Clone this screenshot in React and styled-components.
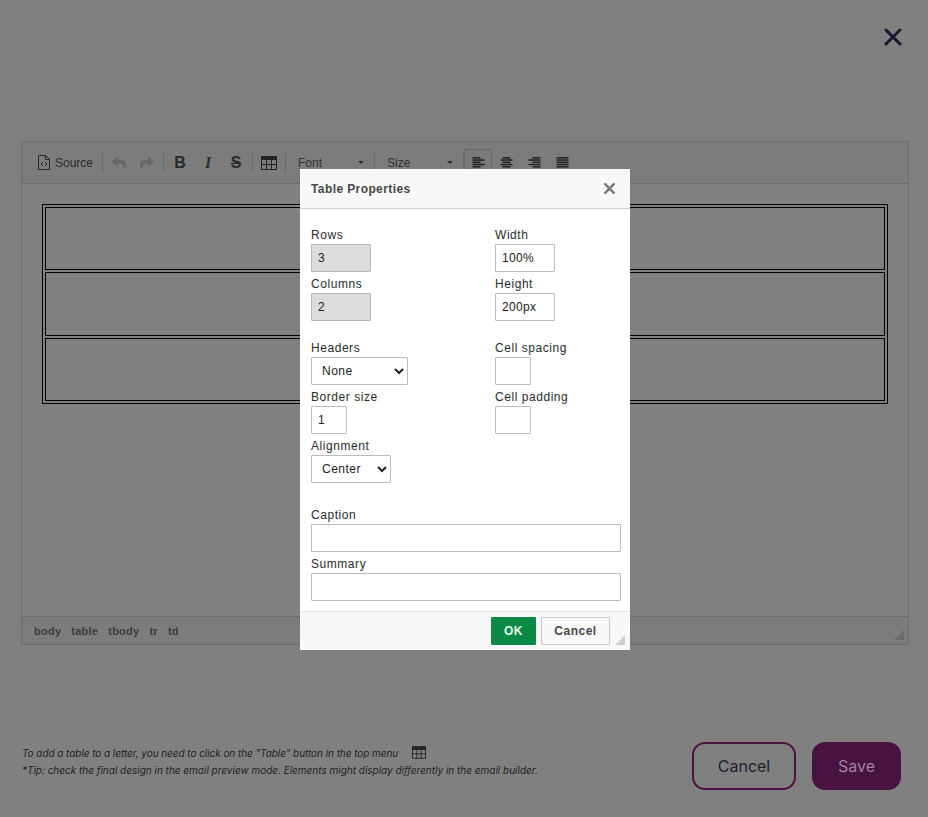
import React from 'react'
import styled, { createGlobalStyle } from 'styled-components'
import { FaReply, FaShare } from 'react-icons/fa'

const GlobalStyle = createGlobalStyle`
  html, body {
    margin: 0;
    padding: 0;
    background: #808080;
  }

  * {
    box-sizing: border-box;
  }
`

const Page = styled.div`
  position: relative;
  width: 928px;
  height: 817px;
  overflow: hidden;
  display: flex;
  flex-direction: column;
  padding: 0 19px 0 21px;
  background: #808080;
  font-family: 'Liberation Sans', Arial, sans-serif;
`

const TopBar = styled.div`
  height: 141px;
  display: flex;
  justify-content: flex-end;
  padding: 28px 7px 0 0;
  color: #17172f;
`

const Editor = styled.div`
  height: 504px;
  display: flex;
  flex-direction: column;
  border: 1px solid #6f6f6f;
`

const Toolbar = styled.div`
  height: 42px;
  flex: none;
  display: flex;
  align-items: center;
  padding-left: 15px;
  background: #7c7c7c;
  border-bottom: 1px solid #6c6c6c;
`

const SourceButton = styled.div`
  width: 63px;
  display: flex;
  align-items: center;
  gap: 5px;
  padding-left: 1px;
  font-size: 12px;
  color: #2c2c2c;
`

const Separator = styled.span`
  width: 1px;
  height: 20px;
  margin: 0 ${props => (props.$tight ? '0' : '2px')} 0 2px;
  background: #6a6a6a;
`

const Tool = styled.div`
  width: 28px;
  height: 28px;
  display: flex;
  align-items: center;
  justify-content: center;
  color: ${props => props.$color || '#2a2a2a'};
  border: 1px solid ${props => (props.$active ? '#686868' : 'transparent')};
  background: ${props => (props.$active ? '#797979' : 'transparent')};
`

const Glyph = styled.span`
  font-family: ${props => (props.$serif ? "'Liberation Serif', serif" : "'Liberation Sans', sans-serif")};
  font-size: 16px;
  font-weight: bold;
  font-style: ${props => (props.$italic ? 'italic' : 'normal')};
  text-decoration: ${props => (props.$strike ? 'line-through' : 'none')};
  color: #2a2a2a;
`

const Combo = styled.div`
  width: 84px;
  display: flex;
  align-items: center;
  justify-content: space-between;
  padding: 0 8px 0 10px;
  font-size: 12px;
  color: #333;
`

const Caret = styled.span`
  width: 0;
  height: 0;
  border-left: 3px solid transparent;
  border-right: 3px solid transparent;
  border-top: 3px solid #2c2c2c;
`

const Content = styled.div`
  flex: 1;
  padding: 20px 20px 0;
`

const DocTable = styled.table`
  width: 100%;
  height: 200px;
  border: 1px solid #000;
  border-spacing: 2px;

  td {
    border: 1px solid #000;
  }
`

const PathBar = styled.div`
  position: relative;
  height: 28px;
  flex: none;
  display: flex;
  align-items: center;
  gap: 10px;
  padding: 0 12px;
  background: #7c7c7c;
  border-top: 1px solid #6c6c6c;
  font-size: 11px;
  font-weight: bold;
  letter-spacing: 0.25px;
  color: #3c3c3c;
`

const Grip = styled.span`
  position: absolute;
  right: ${props => props.$right}px;
  bottom: ${props => props.$bottom}px;
  width: 10px;
  height: 10px;
  background: ${props => props.$color};
  clip-path: polygon(100% 0, 100% 100%, 0 100%);
`

const Footer = styled.div`
  margin-top: 97px;
  display: flex;
  justify-content: space-between;
  padding-right: 8px;
`

const Notes = styled.div`
  padding: 2px 0 0 1px;
  font-family: Inter, sans-serif;
  font-size: 10px;
  font-style: italic;
  color: #222;
`

const Note = styled.div`
  display: flex;
  align-items: center;
  gap: 14px;
  height: 17px;
  letter-spacing: ${props => (props.$tight ? '-0.06px' : '-0.01px')};
`

const Actions = styled.div`
  display: flex;
  gap: 16px;
`

const PageButton = styled.button`
  width: ${props => (props.$primary ? '89px' : '104px')};
  height: 48px;
  border-radius: 13px;
  border: 2px solid #481242;
  background: ${props => (props.$primary ? '#481242' : 'transparent')};
  color: ${props => (props.$primary ? '#a57fa4' : '#1d1f2c')};
  font-family: Inter, sans-serif;
  font-size: 16px;
`

const Dialog = styled.div`
  position: absolute;
  left: 300px;
  top: 169px;
  width: 330px;
  height: 481px;
  display: flex;
  flex-direction: column;
  background: #fff;
  color: #2b2b2b;
  font-size: 12px;
  letter-spacing: 0.55px;
`

const DialogHeader = styled.div`
  height: 40px;
  flex: none;
  display: flex;
  align-items: center;
  justify-content: space-between;
  padding: 0 15px 0 11px;
  background: #f8f8f8;
  border-bottom: 1px solid #d1d1d1;
`

const DialogTitle = styled.div`
  font-weight: bold;
  letter-spacing: 0.4px;
  color: #484848;
`

const DialogClose = styled.span`
  display: flex;
  color: #7a7a7a;
`

const DialogBody = styled.div`
  flex: 1;
  padding: 19px 9px 0 11px;
`

const Columns = styled.div`
  display: grid;
  grid-template-columns: 184px 1fr;
  margin-bottom: ${props => props.$after}px;
`

const Field = styled.div`
  height: 49px;
`

const Label = styled.label`
  display: block;
  height: 16px;
  line-height: 14px;
`

const TextInput = styled.input`
  display: block;
  width: ${props => props.$width};
  height: 28px;
  padding: 0 6px;
  border: 1px solid ${props => (props.disabled ? '#b8b8b8' : '#bcbcbc')};
  border-radius: 1px;
  background: ${props => (props.disabled ? '#dcdcdc' : '#fff')};
  color: #222;
  font-family: 'Liberation Sans', Arial, sans-serif;
  font-size: 12px;
  letter-spacing: 0.3px;
  outline: none;
  opacity: 1;
`

const Select = styled.select`
  display: block;
  width: ${props => props.$width};
  height: 28px;
  padding: 0 2px 0 6px;
  border: 1px solid #bcbcbc;
  border-radius: 1px;
  background: #fff;
  color: #222;
  font-family: 'Liberation Sans', Arial, sans-serif;
  font-size: 12px;
  letter-spacing: 0.5px;
`

const DialogFooter = styled.div`
  position: relative;
  height: 39px;
  flex: none;
  display: flex;
  justify-content: flex-end;
  gap: 5px;
  padding: 5px 20px 0 0;
  background: #f8f8f8;
  border-top: 1px solid #e4e4e4;
`

const DialogButton = styled.button`
  width: ${props => (props.$primary ? '45px' : '69px')};
  height: 28px;
  padding: 0;
  border: 1px solid ${props => (props.$primary ? '#0b8a46' : '#c8c8c8')};
  border-radius: 1px;
  background: ${props => (props.$primary ? '#0b8a46' : '#f8f8f8')};
  color: ${props => (props.$primary ? '#e8f4ec' : '#484848')};
  font-family: 'Liberation Sans', Arial, sans-serif;
  font-size: 12px;
  font-weight: bold;
  letter-spacing: 0.5px;
`

const CloseIcon = ({ size, weight }) => (
  <svg width={size} height={size} viewBox="0 0 18 18" fill="none" stroke="currentColor" strokeWidth={weight} strokeLinecap="round">
    <path d="M2 2 L16 16 M16 2 L2 16" />
  </svg>
)

const SourceIcon = () => (
  <svg width="12" height="15" viewBox="0 0 12 15" fill="none" stroke="#2a2a2a" strokeWidth="1">
    <path d="M.5 .5 H7.5 L11.5 4.5 V14.5 H.5 Z M7.5 .5 V4.5 H11.5" />
    <path d="M5 7 L3 9 L5 11 M7 7 L9 9 L7 11" />
  </svg>
)

const TableIcon = ({ width = 16, height = 14 }) => (
  <svg width={width} height={height} viewBox="0 0 16 14" fill="none" stroke="#222" strokeWidth="1">
    <rect x=".5" y=".5" width="15" height="13" />
    <rect x="0" y="0" width="16" height="4" fill="#222" stroke="none" />
    <path d="M5.5 4 V14 M10.5 4 V14 M0 8.5 H16" />
  </svg>
)

const alignLines = {
  left: [[0, 8], [0, 12], [0, 8], [0, 12], [0, 8]],
  center: [[2, 8], [0, 12], [2, 8], [0, 12], [2, 8]],
  right: [[4, 8], [0, 12], [4, 8], [0, 12], [4, 8]],
  justify: [[0, 12], [0, 12], [0, 12], [0, 12], [0, 12]],
}

const AlignIcon = ({ kind }) => (
  <svg width="13" height="11" viewBox="0 0 12 11" fill="#262626">
    {alignLines[kind].map(([x, w], i) => (
      <rect key={i} x={x} y={i * 2.25} width={w} height="1.6" />
    ))}
  </svg>
)

const rows = [0, 1, 2]

const App = () => {
  return (
    <Page>
      <GlobalStyle />
      <TopBar>
        <CloseIcon size={18} weight={3} />
      </TopBar>

      <Editor>
        <Toolbar>
          <SourceButton>
            <SourceIcon />
            Source
          </SourceButton>
          <Separator />
          <Tool $color="#666"><FaReply size={14} /></Tool>
          <Tool $color="#666"><FaShare size={14} /></Tool>
          <Separator />
          <Tool><Glyph>B</Glyph></Tool>
          <Tool><Glyph $serif $italic>I</Glyph></Tool>
          <Tool><Glyph $strike>S</Glyph></Tool>
          <Separator />
          <Tool><TableIcon /></Tool>
          <Separator />
          <Combo>Font<Caret /></Combo>
          <Separator />
          <Combo>Size<Caret /></Combo>
          <Separator $tight />
          <Tool $active><AlignIcon kind="left" /></Tool>
          <Tool><AlignIcon kind="center" /></Tool>
          <Tool><AlignIcon kind="right" /></Tool>
          <Tool><AlignIcon kind="justify" /></Tool>
        </Toolbar>
        <Content>
          <DocTable>
            <tbody>
              {rows.map(row => (
                <tr key={row}>
                  <td />
                </tr>
              ))}
            </tbody>
          </DocTable>
        </Content>
        <PathBar>
          <span>body</span>
          <span>table</span>
          <span>tbody</span>
          <span>tr</span>
          <span>td</span>
          <Grip $right={4} $bottom={4} $color="#6a6a6a" />
        </PathBar>
      </Editor>

      <Footer>
        <Notes>
          <Note $tight>
            To add a table to a letter, you need to click on the "Table" button in the top menu
            <TableIcon width={14} height={13} />
          </Note>
          <Note>*Tip: check the final design in the email preview mode. Elements might display differently in the email builder.</Note>
        </Notes>
        <Actions>
          <PageButton>Cancel</PageButton>
          <PageButton $primary>Save</PageButton>
        </Actions>
      </Footer>

      <Dialog>
        <DialogHeader>
          <DialogTitle>Table Properties</DialogTitle>
          <DialogClose><CloseIcon size={11} weight={4} /></DialogClose>
        </DialogHeader>
        <DialogBody>
          <Columns $after={15}>
            <div>
              <Field>
                <Label>Rows</Label>
                <TextInput $width="60px" disabled defaultValue="3" />
              </Field>
              <Field>
                <Label>Columns</Label>
                <TextInput $width="60px" disabled defaultValue="2" />
              </Field>
            </div>
            <div>
              <Field>
                <Label>Width</Label>
                <TextInput $width="60px" defaultValue="100%" />
              </Field>
              <Field>
                <Label>Height</Label>
                <TextInput $width="60px" defaultValue="200px" />
              </Field>
            </div>
          </Columns>
          <Columns $after={20}>
            <div>
              <Field>
                <Label>Headers</Label>
                <Select $width="97px" defaultValue="None">
                  <option>None</option>
                </Select>
              </Field>
              <Field>
                <Label>Border size</Label>
                <TextInput $width="36px" defaultValue="1" />
              </Field>
              <Field>
                <Label>Alignment</Label>
                <Select $width="80px" defaultValue="Center">
                  <option>Center</option>
                </Select>
              </Field>
            </div>
            <div>
              <Field>
                <Label>Cell spacing</Label>
                <TextInput $width="36px" />
              </Field>
              <Field>
                <Label>Cell padding</Label>
                <TextInput $width="36px" />
              </Field>
            </div>
          </Columns>
          <Field>
            <Label>Caption</Label>
            <TextInput $width="310px" />
          </Field>
          <Field>
            <Label>Summary</Label>
            <TextInput $width="310px" />
          </Field>
        </DialogBody>
        <DialogFooter>
          <DialogButton $primary>OK</DialogButton>
          <DialogButton>Cancel</DialogButton>
          <Grip $right={5} $bottom={5} $color="#cfcfcf" />
        </DialogFooter>
      </Dialog>
    </Page>
  )
}

export default App
